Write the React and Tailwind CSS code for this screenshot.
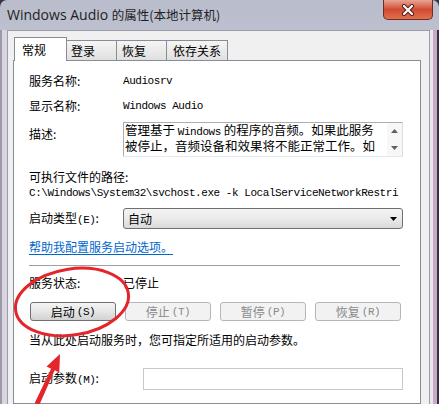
import React from "react";

function Mono({ children, className = "" }) {
    return (
        <span className={"font-['Liberation_Mono',monospace] text-[11px] tracking-[-0.45px] " + className}>
            {children}
        </span>
    );
}

function Row({ label, children, className = "", labelWidth = "w-[94px]" }) {
    return (
        <div className={"flex items-center " + className}>
            <div className={"shrink-0 " + labelWidth}>{label}</div>
            {children}
        </div>
    );
}

function Button({ label, keyChar, disabled }) {
    return (
        <div
            className={
                "flex h-[19px] w-[86px] items-center justify-center rounded-[3px] border " +
                (disabled
                    ? "border-[#b4b7ba] bg-[#f2f2f2] text-[#8a8a8a]"
                    : "border-[#707070] bg-gradient-to-b from-[#f4f4f4] via-[#e6e6e6] to-[#d2d2d2] text-black")
            }
        >
            {label}
            <Mono className="ml-[2px]">({keyChar})</Mono>
        </div>
    );
}

function Tab({ label, selected, className }) {
    if (selected) {
        return (
            <div className={"relative z-10 -mb-px flex h-[24px] items-center border border-b-0 border-[#898c95] bg-white " + className}>
                {label}
            </div>
        );
    }
    return (
        <div className={"flex h-[20px] items-center border border-b-0 border-l-0 border-[#898c95] bg-gradient-to-b from-[#f5f5f5] to-[#e0e0e0] " + className}>
            {label}
        </div>
    );
}

export default function App() {
    return (
        <div className="relative h-[404px] w-[439px] overflow-hidden bg-[#3b3444] font-['Noto_Sans_CJK_SC',sans-serif] text-[12px] leading-[16px] text-black">
            <div className="flex h-full flex-col rounded-t-[7px] bg-gradient-to-b from-[#b8bccb] via-[#d9dbe4] to-[#d8d6e1]">
                {/* title bar */}
                <div className="flex h-[30px] shrink-0 items-start">
                    <div className="whitespace-nowrap pl-[7px] pt-[6px] leading-[18px] text-[#1e1e24]">
                        <span className="font-['Open_Sans',sans-serif] text-[14px]">Windows Audio </span>
                        <span className="text-[12.5px]">的属性(本地计算机)</span>
                    </div>
                    <div className="ml-auto mr-[6px] flex h-[20px] w-[50px] items-center justify-center rounded-b-[5px] border border-t-0 border-[#6e2b22] bg-gradient-to-b from-[#e9a493] via-[#cf4a31] to-[#e2704f]">
                        <svg width="14" height="12" viewBox="0 0 14 12">
                            <path d="M3 2 L11 10 M11 2 L3 10" stroke="#4a1a14" strokeWidth="4" strokeLinecap="round" />
                            <path d="M3 2 L11 10 M11 2 L3 10" stroke="#ffffff" strokeWidth="2.2" strokeLinecap="round" />
                        </svg>
                    </div>
                </div>

                <div className="flex min-h-0 flex-1">
                    {/* left frame */}
                    <div className="w-[7px] shrink-0 border-l-2 border-[#9c98a6] bg-[#d8d5e0]" />

                    {/* dialog body */}
                    <div className="flex min-w-0 flex-1 flex-col border-x border-t border-[#9d9daa] bg-[#f0f0f0] pl-[5px] pr-[8px] pt-[6px]">
                        {/* tabs */}
                        <div className="flex h-[23px] shrink-0 items-end pl-[1px]">
                            <Tab label="常规" selected className="w-[53px] pl-[7px]" />
                            <Tab label="登录" className="w-[50px] pl-[4px]" />
                            <Tab label="恢复" className="w-[50px] pl-[5px]" />
                            <Tab label="依存关系" className="w-[61px] pl-[6px]" />
                        </div>

                        {/* tab page */}
                        <div className="flex flex-1 flex-col border border-[#898c95] bg-white pl-[15px]">
                            <Row label="服务名称:" className="mt-[10px] h-[20px]">
                                <Mono>Audiosrv</Mono>
                            </Row>
                            <Row label="显示名称:" className="mt-[5px] h-[20px]">
                                <Mono>Windows Audio</Mono>
                            </Row>

                            <div className="mt-[6px] flex items-start">
                                <div className="w-[94px] shrink-0 pt-[4px]">描述:</div>
                                <div className="flex h-[35px] w-[280px] border border-[#abadb3] border-b-[#e3e9ef] border-r-[#dbdfe6]">
                                    <div className="min-w-0 flex-1 whitespace-nowrap pl-[1px] text-[12.5px] leading-[13px]">
                                        <div>
                                            管理基于 <Mono className="text-[11.5px]">Windows</Mono> 的程序的音频。如果此服务
                                        </div>
                                        <div>被停止，音频设备和效果将不能正常工作。如</div>
                                    </div>
                                    <div className="flex w-[15px] shrink-0 flex-col justify-between bg-[#f7f7f7]">
                                        <div className="flex h-[17px] items-center justify-center">
                                            <svg width="7" height="4" viewBox="0 0 7 4">
                                                <path d="M0 4 L3.5 0 L7 4 Z" fill="#606060" />
                                            </svg>
                                        </div>
                                        <div className="flex h-[17px] items-center justify-center">
                                            <svg width="7" height="4" viewBox="0 0 7 4">
                                                <path d="M0 0 L7 0 L3.5 4 Z" fill="#606060" />
                                            </svg>
                                        </div>
                                    </div>
                                </div>
                            </div>

                            <div className="mt-[12px] h-[16px]">可执行文件的路径:</div>
                            <div className="flex h-[16px] items-center whitespace-nowrap">
                                <Mono>C:\Windows\System32\svchost.exe -k LocalServiceNetworkRestri</Mono>
                            </div>

                            <Row
                                label={
                                    <>
                                        启动类型<Mono>(E)</Mono>:
                                    </>
                                }
                                className="mt-[7px]"
                            >
                                <div className="flex h-[21px] w-[280px] items-center rounded-[3px] border border-[#707070] bg-gradient-to-b from-[#f3f3f3] via-[#ebebeb] to-[#d9d9d9] pl-[4px] pr-[5px]">
                                    <span className="flex-1">自动</span>
                                    <svg width="7" height="4" viewBox="0 0 7 4">
                                        <path d="M0 0 L7 0 L3.5 4 Z" fill="#000" />
                                    </svg>
                                </div>
                            </Row>

                            <div className="mt-[10px] h-[16px]">
                                <span className="text-[#0066cc] underline underline-offset-2">帮助我配置服务启动选项。</span>
                            </div>

                            <div className="mt-[10px] mr-[20px] border-t border-[#a0a0a0]" />

                            <Row label="服务状态:" className="mt-[9px] h-[16px]">
                                <span>已停止</span>
                            </Row>

                            <div className="mt-[11px] flex gap-[9px] pl-[1px]">
                                <Button label="启动" keyChar="S" />
                                <Button label="停止" keyChar="T" disabled />
                                <Button label="暂停" keyChar="P" disabled />
                                <Button label="恢复" keyChar="R" disabled />
                            </div>

                            <div className="mt-[11px] h-[16px]">当从此处启动服务时，您可指定所适用的启动参数。</div>

                            <Row
                                label={
                                    <>
                                        启动参数<Mono>(M)</Mono>:
                                    </>
                                }
                                labelWidth="w-[114px]"
                                className="mt-[20px]"
                            >
                                <div className="h-[22px] w-[260px] border border-[#c5c8cf] bg-white" />
                            </Row>
                        </div>
                    </div>

                    {/* right frame */}
                    <div className="flex w-[9px] shrink-0">
                        <div className="w-[3px] bg-[#ebe5ee]" />
                        <div className="w-[4px] bg-[#c6abc9]" />
                        <div className="w-[2px] bg-[#3a3040]" />
                    </div>
                </div>
            </div>

            {/* red annotation drawn on the screenshot */}
            <svg className="pointer-events-none absolute inset-0" width="439" height="404" viewBox="0 0 439 404">
                <ellipse cx="72" cy="302" rx="57" ry="33" transform="rotate(-9 72 302)" fill="none" stroke="#e3262b" strokeWidth="3" />
                <polygon points="60,354 59.3,372.4 54.7,370.3 39.3,405 34.7,403 51.1,368.7 46.5,366.6" fill="#e3262b" />
            </svg>
        </div>
    );
}
